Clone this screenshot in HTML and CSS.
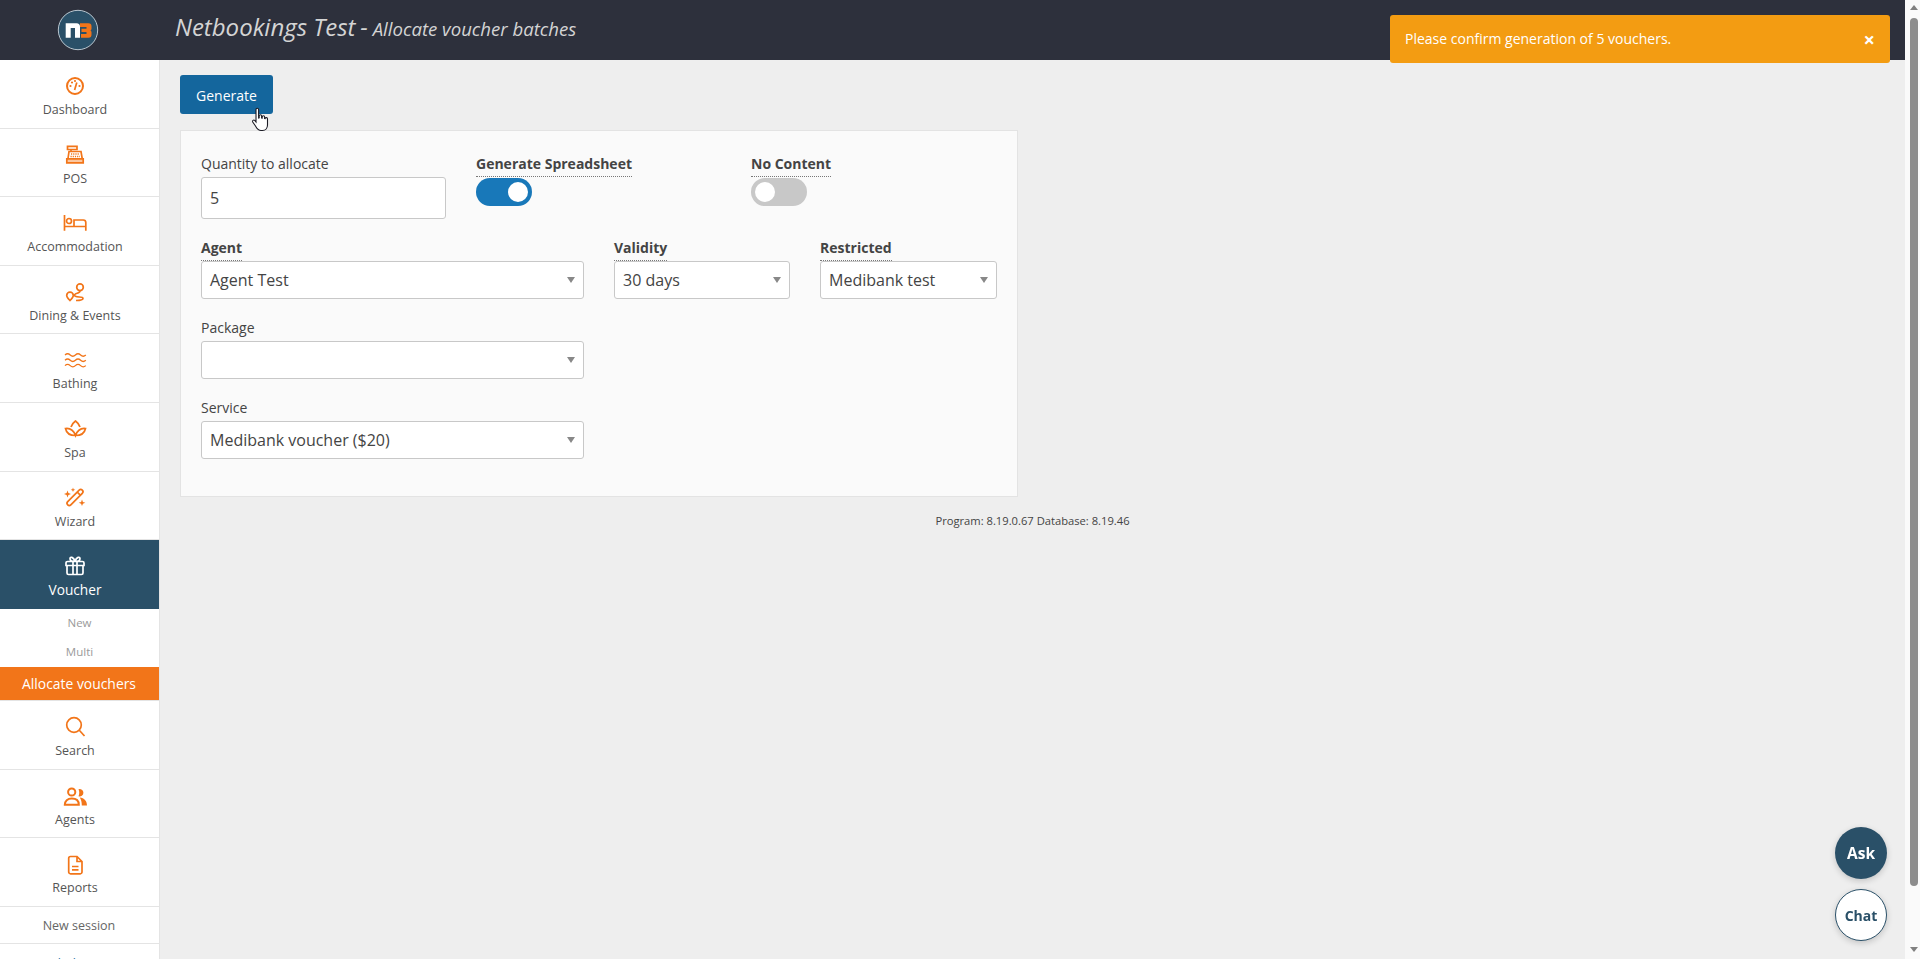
FILE: index.html
```html
<!DOCTYPE html>
<html lang="en">
<head>
<meta charset="utf-8">
<title>Netbookings Test - Allocate voucher batches</title>
<link rel="stylesheet" href="styles.css">
</head>
<body>
<div class="app">
  <div class="page">
    <header class="topbar">
      <div class="logo-box">
        <svg class="logo" width="42" height="42" viewBox="0 0 42 42">
          <circle cx="21" cy="21" r="19.7" fill="#2a5068" stroke="#b9c6cf" stroke-width="1"/>
          <path d="M8.700 14.300h10.800a3.500 3.500 0 0 1 3.500 3.500v10.900h-5V19h-4.300v9.700h-5z" fill="#fff"/>
          <path d="M23 14.300h8.500a3 3 0 0 1 3 3v2.500a2 2 0 0 1-1 1.700 2 2 0 0 1 1 1.700v2.500a3 3 0 0 1-3 3H24v-3.700h5.500v-1.900h-5v-3.300h5v-1.800H23z" fill="#f27519"/>
        </svg>
      </div>
      <h1 class="title"><span class="title-main">Netbookings Test</span> <span class="title-main">-</span> <span class="title-sub">Allocate voucher batches</span></h1>
    </header>
    <div class="content">
      <nav class="sidebar">
        <a class="nav-item">
          <svg class="icon" viewBox="0 0 24 24"><circle cx="12" cy="12" r="8" class="st"/><path d="M11.600 16 13.800 8.500" class="st thin"/><circle cx="7.500" cy="12" r="1.100" class="fl"/><circle cx="9" cy="8.500" r="1.100" class="fl"/><circle cx="12" cy="7" r="1.100" class="fl"/><circle cx="16.500" cy="12" r="1.100" class="fl"/></svg>
          <span>Dashboard</span>
        </a>
        <a class="nav-item">
          <svg class="icon" viewBox="0 0 24 24"><path d="M4.500 3.300h9.500v3.200H4.500zM8 6.500v2" class="st thin"/><path d="M5 15.500 6 8.500h12l1.200 7" class="st thin"/><path d="M3.800 15.800h16.400v4H3.800z" class="st thin pale"/><path d="M8 11h8.500M7.500 13.500h9.500" class="dots"/></svg>
          <span>POS</span>
        </a>
        <a class="nav-item">
          <svg class="icon" viewBox="0 0 24 24"><path d="M1.500 4v15.800M1.500 15.500h21M22.800 19.800V11.500a2.500 2.500 0 0 0-2.500-2.500H11v6.500" class="st thin"/><circle cx="6" cy="10" r="2.500" class="st thin"/></svg>
          <span>Accommodation</span>
        </a>
        <a class="nav-item">
          <svg class="icon" viewBox="0 0 24 24"><circle cx="17" cy="7.200" r="3.300" class="st thin"/><path d="M17 11c0 3-5.500 1.500-5.500 4.300s8.500.7 8.500 2.900-3 2.300-7 2.300" class="st thin"/><path d="M7 20.500c-2-2-3.300-3.300-3.300-5a3.300 3.300 0 0 1 6.600 0c0 1.700-1.300 3-3.300 5z" class="st thin"/></svg>
          <span>Dining &amp; Events</span>
        </a>
        <a class="nav-item">
          <svg class="icon" viewBox="0 0 24 24"><path d="M2 7q2.600-2.500 5.200 0t5.200 0 5.200 0 5.200 0M2 12.300q2.600-2.500 5.200 0t5.200 0 5.200 0 5.200 0M2 17.600q2.600-2.500 5.200 0t5.200 0 5.200 0 5.200 0" class="st fine"/></svg>
          <span>Bathing</span>
        </a>
        <a class="nav-item">
          <svg class="icon" viewBox="0 0 24 24"><path d="M12.500 18.500c-5.500 0-9-2-10-7 4-.5 8 1.500 10 7 2-5.500 6-7.500 10-7-1 5-4.500 7-10 7z" class="st thin"/><path d="M8 10C8.500 7.500 10.500 5.500 12.500 4c2 1.500 4 3.500 4.500 6" class="st thin"/></svg>
          <span>Spa</span>
        </a>
        <a class="nav-item">
          <svg class="icon" viewBox="0 0 24 24"><rect x="1.700" y="9.300" width="20.600" height="4.400" rx="2.200" transform="rotate(-45 12 11.500)" class="st thin"/><path d="M14.300 6.200l3.200 3.200" class="st thin"/><path d="M4.500 4.500l.9 2.600 2.600.9-2.600.9-.9 2.600-.9-2.600L1 8l2.600-.9zM10 1.500l.6 1.700 1.700.6-1.700.6-.6 1.700-.6-1.700-1.700-.6 1.700-.6zM19 13.500l.9 2.400 2.400.9-2.400.9-.9 2.400-.9-2.400-2.400-.9 2.400-.9z" class="fl"/></svg>
          <span>Wizard</span>
        </a>
        <a class="nav-item active">
          <svg class="icon" viewBox="0 0 24 24"><path d="M4.500 7.500h15a1.500 1.500 0 0 1 1.500 1.500v2.500H3V9a1.500 1.500 0 0 1 1.500-1.500zM4 11.500h16v7.500a1.500 1.500 0 0 1-1.500 1.500h-13A1.500 1.500 0 0 1 4 19zM10 7.500v13M14 7.500v13M12 7.500c-3 0-5-1-5-2.800 0-2.200 3.500-2.200 5 2.800zM12 7.500c3 0 5-1 5-2.800 0-2.200-3.500-2.200-5 2.800z" class="st thin white"/></svg>
          <span>Voucher</span>
        </a>
        <a class="sub-item">New</a>
        <a class="sub-item">Multi</a>
        <a class="sub-item current">Allocate vouchers</a>
        <a class="nav-item">
          <svg class="icon" viewBox="0 0 24 24"><circle cx="11" cy="10" r="7.300" class="st thin"/><path d="M16.300 15.300 21.500 21" class="st thin"/></svg>
          <span>Search</span>
        </a>
        <a class="nav-item">
          <svg class="icon" viewBox="0 0 24 24"><circle cx="8.700" cy="8" r="3.600" class="st"/><path d="M1.800 20.800c0-4 2.800-6.300 7-6.300s7 2.300 7 6.300z" class="st"/><path d="M15.500 5.200a3.700 3.700 0 1 1 0 7c1-2.200 1-4.800 0-7zM16.800 13.600c4.300.5 7.200 3.200 7.200 7.900h-5.200c0-3.200-.6-5.900-2-7.900z" class="fl"/></svg>
          <span>Agents</span>
        </a>
        <a class="nav-item">
          <svg class="icon" viewBox="0 0 24 24"><path d="M7.500 4.500H14l5 5v10.500a1.800 1.800 0 0 1-1.800 1.800H7.500A1.800 1.800 0 0 1 5.700 20V6.300a1.800 1.800 0 0 1 1.800-1.800zM14 4.500v5h5" class="st thin"/><path d="M9 14.500h6.500M9 17.800h6.500" class="st thin"/></svg>
          <span>Reports</span>
        </a>
        <a class="link-item">New session</a>
        <a class="link-item">Multi-location</a>
      </nav>
      <main class="main">
        <button class="btn-generate" type="button">Generate</button>
        <section class="panel">
          <div class="row">
            <div class="field col-a">
              <label class="label">Quantity to allocate</label>
              <input class="input" type="text" value="5">
            </div>
            <div class="field col-a">
              <label class="label strong">Generate Spreadsheet</label>
              <span class="toggle on"><i class="knob"></i></span>
            </div>
            <div class="field col-a">
              <label class="label strong">No Content</label>
              <span class="toggle"><i class="knob"></i></span>
            </div>
          </div>
          <div class="row">
            <div class="field col-wide">
              <label class="label strong">Agent</label>
              <div class="select">Agent Test</div>
            </div>
            <div class="field col-narrow">
              <label class="label strong">Validity</label>
              <div class="select">30 days</div>
            </div>
            <div class="field col-narrow">
              <label class="label strong">Restricted</label>
              <div class="select">Medibank test</div>
            </div>
          </div>
          <div class="row">
            <div class="field col-wide">
              <label class="label">Package</label>
              <div class="select"></div>
            </div>
          </div>
          <div class="row">
            <div class="field col-wide">
              <label class="label">Service</label>
              <div class="select">Medibank voucher ($20)</div>
            </div>
          </div>
        </section>
        <p class="version">Program: 8.19.0.67 Database: 8.19.46</p>
      </main>
    </div>
  </div>
  <div class="scrollbar">
    <i class="arrow up"></i>
    <i class="thumb"></i>
    <i class="arrow down"></i>
  </div>
</div>

<div class="toast">
  <span class="toast-text">Please confirm generation of 5 vouchers.</span>
  <b class="toast-close">×</b>
</div>
<button class="fab ask" type="button">Ask</button>
<button class="fab chat" type="button">Chat</button>
<svg class="cursor" width="20" height="26" viewBox="0 0 20 26">
  <path d="M5 2.500a1.300 1.300 0 0 1 2.600 0V11l.6-.2V9a1.200 1.200 0 0 1 2.400 0v2l.6.1V10a1.200 1.200 0 0 1 2.400 0v1.500l.5.100a1.200 1.200 0 0 1 2.400.4v6c0 3-2 5.500-5 5.500H10c-3 0-4-2-5.500-4.500L1.700 15a1.300 1.300 0 0 1 2-1.600L5 15z" fill="#fff" stroke="#1b1b24" stroke-width="1.100"/>
</svg>
</body>
</html>
```
FILE: styles.css
```css
* { box-sizing: border-box; }
html, body { margin: 0; height: 100%; overflow: hidden; }
body { font-family: "Open Sans", "Noto Sans", sans-serif; font-size: 14px; color: #444; background: #eee; }
.app { display: flex; height: 100vh; }
.page { flex: 1; display: flex; flex-direction: column; min-width: 0; }

.topbar { height: 60px; flex: none; background: #2d303c; display: flex; align-items: center; }
.logo-box { width: 156px; flex: none; display: flex; justify-content: center; }
.logo { display: block; }
.title { margin: 0 0 6px 19px; font-weight: 400; font-style: italic; color: #d4d4d4; font-size: 18.600px; line-height: 1; white-space: nowrap; }
.title-main { font-size: 24px; }

.content { flex: 1; display: flex; min-height: 0; }
.sidebar { width: 160px; flex: none; background: #fff; border-right: 1px solid #e4e4e4; overflow: hidden; }
.nav-item { height: 68.600px; display: flex; flex-direction: column; align-items: center; padding: 14px 9px 0 0; border-bottom: 1px solid #e4e4e4; font-size: 12.500px; color: #555; }
.nav-item span { line-height: 18px; margin-top: 3px; }
.icon { width: 24px; height: 24px; display: block; flex: none; }
.st { fill: none; stroke: #f27519; stroke-width: 2; }
.thin { stroke-width: 1.700; }
.fine { stroke-width: 1.300; }
.white { stroke: #fff; }
.pale { fill: #fbc79f; }
.fl { fill: #f27519; }
.dots { fill: none; stroke: #f27519; stroke-width: 1.500; stroke-dasharray: 1.200 1; }
.nav-item.active { background: #2a5068; color: #fff; border-bottom: 0; height: 69px; }
.nav-item.active span { font-size: 13.700px; margin-top: 3px; }
.sub-item { height: 29px; display: flex; align-items: center; justify-content: center; font-size: 11.500px; color: #9a9a9a; padding-bottom: 2px; }
.sub-item.current { height: 34px; background: #f27519; color: #fff; font-size: 13.900px; padding: 0 1px 0 0; border-bottom: 1px solid #e4e4e4; }
.link-item { height: 37px; display: flex; align-items: center; justify-content: center; font-size: 12.500px; color: #666; border-bottom: 1px solid #e4e4e4; padding: 2px 1px 0 0; flex: none; }
.link-item:last-child { border-bottom: 0; color: #2a6fa8; }

.main { flex: 1; min-width: 0; padding: 15px 20px 0; }
.btn-generate { display: block; width: 93px; height: 39px; padding: 2px 0 0; border: 0; border-radius: 3px; background: #14669d; color: #fff; font: 14px "Open Sans", sans-serif; }
.panel { width: 838px; height: 367px; margin-top: 16px; padding: 20px; background: #fafafa; border: 1px solid #e3e3e3; }
.row { display: flex; gap: 30px; margin-bottom: 16px; }
.field { display: flex; flex-direction: column; align-items: flex-start; }
.col-a { width: 245px; }
.col-wide { width: 383px; }
.col-narrow { width: 177px; }
.col-narrow:nth-child(2) { width: 176px; }
.label { font-size: 14px; line-height: 19px; height: 26px; padding-top: 3px; color: #444; }
.label.strong { font-weight: 700; border-bottom: 1px dotted #777; }
.input { width: 100%; height: 42px; padding: 0 8px; border: 1px solid #c8c8c8; border-radius: 3px; background: #fff; color: #444; font: 16px "Open Sans", sans-serif; }
.select { position: relative; width: 100%; height: 38px; line-height: 36px; padding: 0 8px; border: 1px solid #c8c8c8; border-radius: 3px; background: #fff; color: #444; font-size: 16px; }
.select::after { content: ""; position: absolute; right: 8px; top: 15px; border-style: solid; border-width: 6px 4px 0; border-color: #888 transparent transparent; }
.toggle { position: relative; display: block; width: 56px; height: 28px; border-radius: 14px; background: #c8c8c8; margin-top: 1px; }
.toggle.on { background: #1878b9; }
.knob { position: absolute; top: 4px; left: 4px; width: 20px; height: 20px; border-radius: 50%; background: #fff; }
.toggle.on .knob { left: 32px; }
.version { margin: 16px 0 0; text-align: center; font-size: 11.200px; line-height: 15px; color: #444; }

.scrollbar { width: 15px; flex: none; background: #fafafa; display: flex; flex-direction: column; align-items: center; padding: 0 0 4px 2px; }
.arrow { flex: none; width: 0; height: 0; border-style: solid; border-color: transparent; }
.arrow.up { margin-top: 5px; border-width: 0 4px 5px; border-bottom-color: #808080; }
.arrow.down { margin-top: auto; border-width: 5px 4px 0; border-top-color: #808080; margin-bottom: 3px; }
.thumb { width: 8px; height: 868px; margin-top: 8px; border-radius: 4px; background: #8c8c8c; }

.toast { position: fixed; left: 1390px; top: 15px; width: 500px; height: 48px; display: flex; align-items: center; justify-content: space-between; padding: 0 15px; border-radius: 3px; background: #f39c12; color: #fff; font-size: 14px; }
.toast-text { margin-top: -2px; }
.toast-close { font-size: 20px; line-height: 1; margin: 1px 0 0 0; }
.fab { position: fixed; left: 1835px; width: 52px; height: 52px; padding: 0; border-radius: 50%; font: 700 14px "Open Sans", sans-serif; box-shadow: 0 2px 6px rgba(0,0,0,.18); }
.ask { top: 827px; background: #2a5068; color: #fff; border: 0; font-size: 15.500px; }
.chat { top: 889px; background: #fff; color: #2a5068; border: 1px solid #2a5068; }
.cursor { position: fixed; left: 251px; top: 107px; }
```
